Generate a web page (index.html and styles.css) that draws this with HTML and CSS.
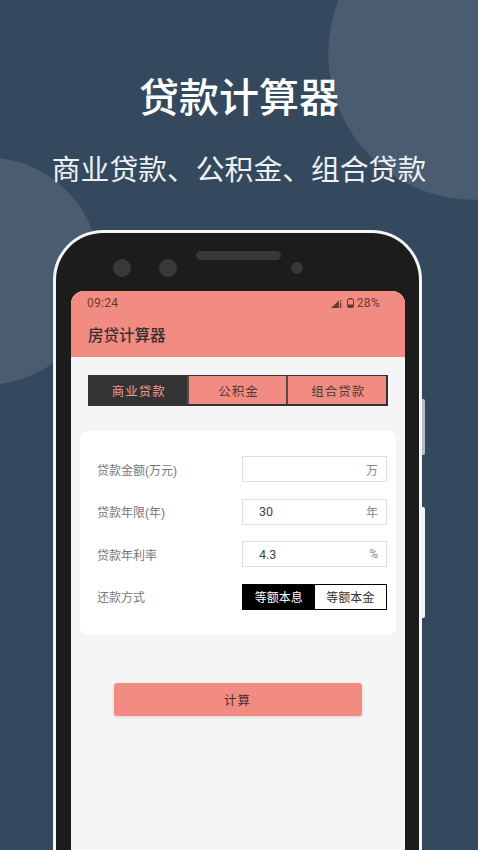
FILE: index.html
```html
<!DOCTYPE html>
<html>

<head>
    <meta charset="utf-8">
    <title>贷款计算器</title>
    <link rel="stylesheet" href="styles.css">
</head>

<body>
    <div class="heading">
        <h1 class="title">贷款计算器</h1>
        <p class="subtitle">商业贷款、公积金、组合贷款</p>
    </div>

    <div class="phone">
        <div class="btnGray"></div>
        <div class="btnWhite"></div>

        <div class="bezel">
            <div class="camera big"></div>
            <div class="camera big second"></div>
            <div class="speaker"></div>
            <div class="camera small"></div>
        </div>

        <div class="screen">
            <div class="appHeader">
                <div class="statusBar">
                    <span>09:24</span>
                    <div class="statusRight">
                        <svg class="signal" width="11" height="9" viewBox="0 0 11 9">
                            <path d="M0 9 L8 1.5 V9 Z" fill="#6b3a36" />
                            <rect x="9" y="3.5" width="1.3" height="5.5" fill="#6b3a36" />
                            <rect x="9" y="1" width="1.3" height="1.5" fill="#6b3a36" />
                        </svg>
                        <svg class="battery" width="7" height="10" viewBox="0 0 7 10">
                            <rect x="2" y="0" width="3" height="1" fill="#6b3a36" />
                            <rect x="0.5" y="1" width="6" height="8.5" rx="1" fill="none" stroke="#6b3a36" />
                            <rect x="1" y="6.5" width="5" height="3" fill="#6b3a36" />
                        </svg>
                        <span>28%</span>
                    </div>
                </div>
                <div class="appTitle">房贷计算器</div>
            </div>

            <div class="tabs">
                <div class="tab active">商业贷款</div>
                <div class="tab">公积金</div>
                <div class="tab">组合贷款</div>
            </div>

            <div class="card">
                <div class="row">
                    <div class="label">贷款金额(万元)</div>
                    <div class="field"><span class="value"></span><span class="unit">万</span></div>
                </div>
                <div class="row">
                    <div class="label">贷款年限(年)</div>
                    <div class="field"><span class="value">30</span><span class="unit">年</span></div>
                </div>
                <div class="row">
                    <div class="label">贷款年利率</div>
                    <div class="field"><span class="value">4.3</span><span class="unit">%</span></div>
                </div>
                <div class="row">
                    <div class="label">还款方式</div>
                    <div class="toggle">
                        <div class="option selected">等额本息</div>
                        <div class="option">等额本金</div>
                    </div>
                </div>
            </div>

            <button class="calc">计算</button>
        </div>
    </div>
</body>

</html>
```

FILE: styles.css
```css
* {
    box-sizing: border-box;
}

html,
body {
    margin: 0;
    padding: 0;
    height: 850px;
    overflow: hidden;
}

body {
    background-color: #34495e;
    background-image:
        radial-gradient(circle 146px at 474px 54px, #495c70 99.5%, transparent 100%),
        radial-gradient(circle 114px at -14px 271px, #495c70 99.5%, transparent 100%);
    font-family: "Liberation Sans", "Noto Sans CJK SC", sans-serif;
    display: flex;
    flex-direction: column;
    align-items: center;
}

.heading {
    flex-shrink: 0;
    height: 230px;
    padding-top: 71px;
    text-align: center;
    color: white;
}

.title {
    margin: 0;
    font-size: 40px;
    line-height: 54px;
    font-weight: 500;
}

.subtitle {
    margin: 25px 0 0;
    font-size: 28.8px;
    line-height: 40px;
    font-weight: 400;
    color: #eef1f3;
}

.phone {
    position: relative;
    width: 369px;
    height: 620px;
    margin-left: -3px;
    flex-shrink: 0;
    padding: 0 14px 0 15px;
    background-color: #1c1c1c;
    border: 3px solid #f4f6f8;
    border-bottom: none;
    border-radius: 50px 50px 0 0;
}

.btnGray {
    position: absolute;
    right: -6px;
    top: 166px;
    width: 3px;
    height: 56px;
    background-color: #b4bcc4;
    border-radius: 0 2px 2px 0;
}

.btnWhite {
    position: absolute;
    right: -6px;
    top: 274px;
    width: 3px;
    height: 111px;
    background-color: #f4f6f8;
    border-radius: 0 2px 2px 0;
}

.bezel {
    position: relative;
    height: 58px;
}

.camera {
    position: absolute;
    border-radius: 50%;
    background-color: #383838;
}

.camera.big {
    left: 42px;
    top: 26px;
    width: 18px;
    height: 18px;
}

.camera.big.second {
    left: 88px;
}

.camera.small {
    left: 220px;
    top: 29px;
    width: 12px;
    height: 12px;
}

.speaker {
    position: absolute;
    left: 125px;
    top: 18px;
    width: 85px;
    height: 9px;
    border-radius: 5px;
    background-color: #383838;
}

.screen {
    width: 334px;
    height: 562px;
    background-color: #f5f5f5;
    border-radius: 13px 13px 0 0;
    overflow: hidden;
}

.appHeader {
    height: 66px;
    background-color: #f28b82;
    padding: 0 25px 0 16px;
}

.statusBar {
    display: flex;
    justify-content: space-between;
    align-items: center;
    height: 24px;
    font-family: Roboto, sans-serif;
    font-size: 12px;
    letter-spacing: 0.3px;
    color: #6b3a36;
}

.statusRight {
    display: flex;
    align-items: center;
}

.signal {
    margin-right: 5px;
}

.battery {
    margin-right: 3px;
}

.appTitle {
    margin-top: 10px;
    margin-left: 1px;
    font-size: 15.5px;
    line-height: 22px;
    font-weight: 500;
    color: #35302f;
}

.tabs {
    display: flex;
    height: 31px;
    margin: 18px 17px 0;
    border: 1px solid #333;
    border-width: 1px 2px 2px 1px;
    background-color: #f28b82;
}

.tab {
    flex: 1;
    display: flex;
    justify-content: center;
    align-items: center;
    padding-left: 2px;
    font-size: 12.5px;
    letter-spacing: 1px;
    color: #4d3b3a;
    border-left: 2px solid #5a4a49;
}

.tab.active {
    background-color: #333;
    color: #ef9a92;
    border-left: none;
}

.card {
    margin: 25px 9px 0;
    height: 204px;
    padding: 25px 9px 0 17px;
    background-color: white;
    border-radius: 7px;
}

.row {
    display: flex;
    justify-content: space-between;
    align-items: center;
    height: 26px;
    margin-bottom: 16.5px;
}

.label {
    font-size: 12px;
    color: #777;
}

.field {
    display: flex;
    justify-content: space-between;
    align-items: center;
    width: 145px;
    height: 26px;
    padding: 0 8px 0 16px;
    border: 1px solid #dedede;
    font-family: Roboto, "Noto Sans CJK SC", sans-serif;
    font-size: 12.5px;
    color: #444;
}

.unit {
    font-size: 12px;
    color: #888;
}

.toggle {
    display: flex;
    width: 145px;
    height: 26px;
    border: 1px solid black;
}

.option {
    flex: 1;
    display: flex;
    justify-content: center;
    align-items: center;
    font-size: 12px;
    color: #333;
}

.option.selected {
    background-color: black;
    color: white;
}

.calc {
    display: block;
    width: 248px;
    height: 33px;
    margin: 48px 0 0 42.5px;
    padding: 0;
    border: none;
    border-radius: 3px;
    background-color: #f28b82;
    box-shadow: 0 1px 3px rgba(0, 0, 0, 0.15);
    font-family: inherit;
    font-size: 12.5px;
    letter-spacing: 1px;
    color: #4a2f2d;
}
```
